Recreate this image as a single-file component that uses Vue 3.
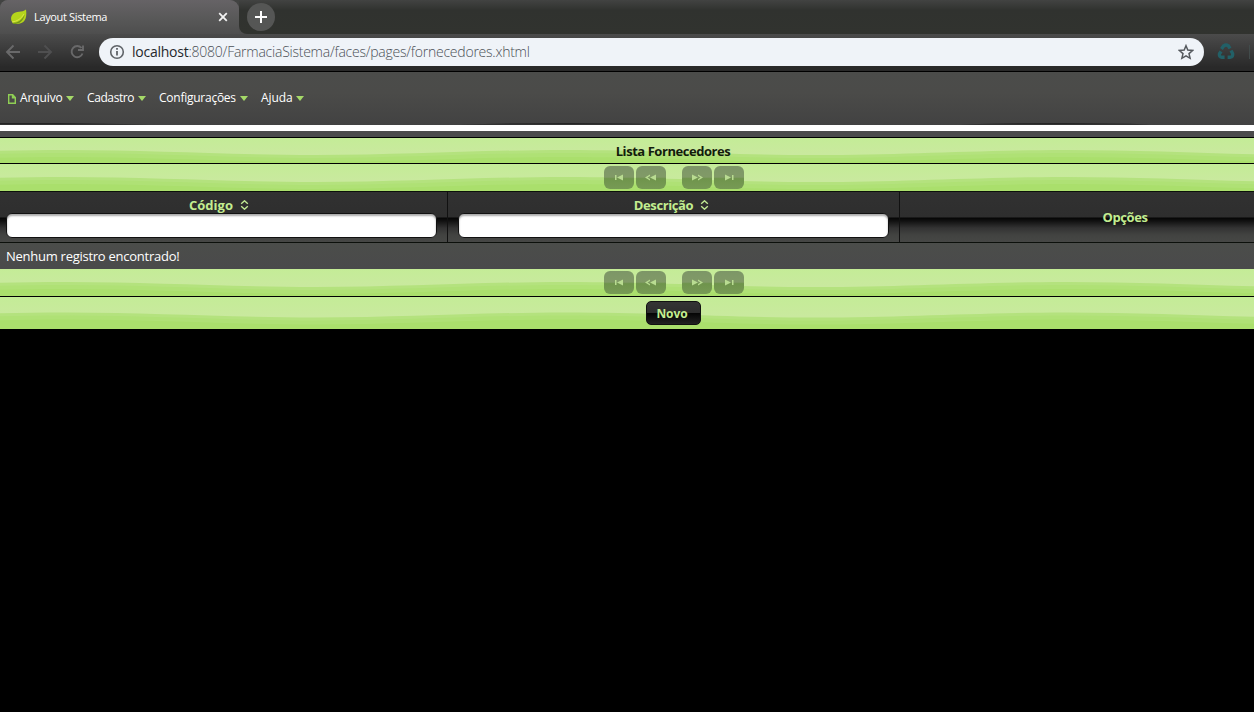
<script setup>
import { h } from 'vue'

const menu = ['Arquivo', 'Cadastro', 'Configurações', 'Ajuda']

// Repeating crest every 500px, first one near x = 66
const wave = (y) => {
  let d = `M-184 ${y + 5}`
  for (let x = -184; x < 1254; x += 250) {
    const up = ((x + 184) / 250) % 2 === 0
    const from = up ? y + 5 : y
    const to = up ? y : y + 5
    d += `C${x + 90} ${from} ${x + 160} ${to} ${x + 250} ${to}`
  }
  return d + 'V40H-184Z'
}

const Waves = (props) =>
  h('svg', { class: 'waves', width: 1254, height: 40, viewBox: '0 0 1254 40' }, [
    h('path', { d: wave(props.y), fill: '#b4e27e' }),
    h('path', { d: wave(props.y + 3), fill: '#afe175' }),
    h('path', { d: wave(props.y + 7), fill: '#aadf6c' }),
  ])
Waves.props = ['y']

const pagers = [
  'M11 9h1.500v5h-1.500zM19 8.500v6l-6-3z',
  'M14 8.500v1.500l-2.500 1.500 2.500 1.500v1.500l-5-3zM20 8.500v6l-6-3z',
  'M10 8.500v6l6-3zM16 8.500v1.500l2.500 1.500-2.500 1.500v1.500l5-3z',
  'M11 8.500v6l6-3zM18 9h1.500v5h-1.500z',
]
</script>

<template>
  <div class="screen">
    <header class="browser">
      <div class="tabs">
        <div class="tab">
          <svg class="leaf" width="18" height="18" viewBox="0 0 18 18">
            <path d="M16 1.500C12 5 6 2.500 2.500 6.500c-3 4-1 9 3 9.500 8 .5 12-4 10.500-14.500z" fill="#b5d51b" />
            <path d="M2 15c6 0 10-3 13-9-2 8-6 10-11 10z" fill="#74951c" />
            <path d="M2 14q8-1 12-8" fill="none" stroke="#dbe846" />
          </svg>
          <span class="tab-title">Layout Sistema</span>
          <svg class="close" width="10" height="10" viewBox="0 0 10 10"><path d="M1.200 1.200l7.600 7.600M8.800 1.200L1.200 8.800" stroke="#f3f3f3" stroke-width="1.800" /></svg>
        </div>
        <div class="tab-edge"><div class="plus"><svg width="12" height="12" viewBox="0 0 12 12"><path d="M6 0v12M0 6h12" stroke="#fff" stroke-width="2" /></svg></div></div>
      </div>
      <div class="toolbar">
        <svg class="nav" width="94" height="28" viewBox="0 0 94 28" fill="none" stroke-width="1.900">
          <path d="M20 14H7M13.500 7.500L7 14l6.500 6.500" stroke="#69696a" />
          <path d="M38 14h13M44.500 7.500L51 14l-6.500 6.500" stroke="#4f4f50" />
          <path d="M81.500 10A5.600 5.600 0 1 0 82.500 15.500M83 7.500v4.500h-5" stroke="#69696a" />
        </svg>
        <div class="address">
          <svg class="info" width="16" height="16" viewBox="0 0 16 16"><circle cx="8" cy="8" r="6.300" fill="none" stroke="#5f6368" stroke-width="1.600" /><path d="M8 7v4.500M8 4v1.700" stroke="#5f6368" stroke-width="1.800" /></svg>
          <span class="url"><b>localhost</b>:8080/FarmaciaSistema/faces/pages/fornecedores.xhtml</span>
          <svg class="star" width="16" height="16" viewBox="0 0 16 16"><path d="M8 1.700l1.800 4.400 4.800.4-3.600 3.100 1.100 4.700L8 11.800l-4.100 2.500L5 9.600 1.400 6.500l4.800-.4z" fill="none" stroke="#55595e" stroke-width="1.500" /></svg>
        </div>
        <svg class="recycle" width="18" height="18" viewBox="0 0 18 18" fill="none" stroke="#226067" stroke-width="3.400">
          <path d="M4.500 6L6.500 3q2.500-1.800 5 0l1.500 2.500" />
          <path d="M14 7.500l1.600 3q.6 3.200-2.200 3.700h-2.800" />
          <path d="M7.600 14.200H4.800q-3.100-.5-2.300-3.400L4 8.300" />
        </svg>
        <i class="split"></i>
      </div>
    </header>

    <nav class="menubar">
      <svg class="doc" width="8" height="10" viewBox="0 0 8 10"><path d="M.7.700h4l2.600 2.800v5.800H.7zM4.500.700v3h3" fill="none" stroke="#8fcf54" stroke-width="1.400" /></svg>
      <a v-for="(m, i) in menu" :key="m" :class="'m' + i"><span>{{ m }}</span><i class="caret"></i></a>
      <svg class="menu-shade" width="1254" height="3" viewBox="0 0 1254 3"><path d="M0 1H60L150 2.500H0zM460 2.500Q570-.5 680 2.500zM960 2.500Q1070-.5 1150 2.500z" fill="#242424" /></svg>
    </nav>
    <div class="white"></div>
    <div class="gap"></div>

    <div class="green title"><Waves :y="12" /><strong>Lista Fornecedores</strong></div>
    <div class="green pager top">
      <Waves :y="13" />
      <span v-for="(p, i) in pagers" :key="i" class="page-btn"><svg width="30" height="23" viewBox="0 0 30 23"><path :d="p" fill="#b9dc91" /></svg></span>
    </div>
    <div class="head">
      <div class="col c1"><div class="label">Código<svg width="9" height="10" viewBox="0 0 9 10"><path d="M1.200 3.800L4.500.8l3.300 3M1.200 6.200l3.300 3 3.300-3" fill="none" stroke="#c3ec94" stroke-width="1.400" /></svg></div><input type="text" /></div>
      <div class="col c2"><div class="label">Descrição<svg width="9" height="10" viewBox="0 0 9 10"><path d="M1.200 3.800L4.500.8l3.300 3M1.200 6.200l3.300 3 3.300-3" fill="none" stroke="#c3ec94" stroke-width="1.400" /></svg></div><input type="text" /></div>
      <div class="col c3"><span>Opções</span></div>
    </div>
    <div class="empty"><span>Nenhum registro encontrado!</span></div>
    <div class="green pager">
      <Waves :y="13" />
      <span v-for="(p, i) in pagers" :key="i" class="page-btn"><svg width="30" height="23" viewBox="0 0 30 23"><path :d="p" fill="#b9dc91" /></svg></span>
    </div>
    <div class="green foot"><Waves :y="15.500" /><button type="button">Novo</button></div>
  </div>
</template>

<style>
body { margin: 0; background: #000; overflow: hidden; }
</style>
<style scoped>
* { box-sizing: border-box; }
.screen { width: 1254px; height: 712px; overflow: hidden; background: #000; font-family: "Open Sans", "Noto Sans", sans-serif; font-size: 13px; }
svg { display: block; flex: none; }
.browser { height: 72px; border-bottom: 1px solid #000; background: #303030; }
.tabs { height: 34px; display: flex; background: linear-gradient(90deg, #4e4e4e 250px, transparent 250px), #4e4e4e; }
.tab { width: 239px; height: 34px; display: flex; align-items: center; padding-left: 10px; background: linear-gradient(#666366, #575757 60%, #4e4e4e); border-radius: 8px 9px 0 0; box-shadow: 0 -10px 0 #424342; }
.tab-title { margin-left: 6px; width: 184px; color: #fff; font-size: 11px; letter-spacing: -.35px; white-space: nowrap; position: relative; top: -1px; }
.tab-edge { flex: 1; height: 34px; background: linear-gradient(#424342, #30322f 30%, #31332f); border-bottom-left-radius: 8px; }
.plus { width: 28px; height: 28px; margin: 3px 0 0 8px; border-radius: 50%; background: #555655; display: flex; align-items: center; justify-content: center; }
.toolbar { height: 37px; padding-bottom: 2px; display: flex; align-items: center; background: linear-gradient(#4b4b4b, #292929 90%); }
.nav { margin-right: 5px; }
.address { width: 1105px; height: 28px; border-radius: 14px; background: #eff3f8; display: flex; align-items: center; padding: 0 10px; }
.url { margin-left: 7px; flex: 1; font-size: 14px; font-weight: 300; color: #4b5056; letter-spacing: -.24px; white-space: nowrap; }
.url b { color: #25282c; font-weight: 400; }
.recycle { margin-left: 13px; }
.split { width: 1px; height: 14px; margin-left: 14px; background: #414b4b; }
.menubar { position: relative; height: 53px; display: flex; align-items: center; padding-left: 8px; background: linear-gradient(#4b4c4a, #4b4b49 40%, #424242); color: #fff; font-size: 12px; }
.menubar a { height: 20px; display: flex; align-items: center; justify-content: space-between; }
.m0 { width: 54px; margin-left: 4px; letter-spacing: -.1px; }
.m1 { width: 59px; margin-left: 13px; letter-spacing: -.4px; }
.m2 { width: 89px; margin-left: 13px; letter-spacing: -.25px; }
.m3 { width: 43px; margin-left: 13px; letter-spacing: -.1px; }
.menubar a span { position: relative; top: -1px; }
.caret { border: 4px solid transparent; border-top: 5px solid #a5d968; border-bottom: 0; }
.menu-shade { position: absolute; left: 0; bottom: 0; }
.white { height: 6px; background: #fff; }
.gap { height: 6px; background: #4b4b4c; }
.green { position: relative; overflow: hidden; display: flex; align-items: center; padding-left: 92px; justify-content: center; background: linear-gradient(#c4ec97, #c9e99e 60%); border-top: 1px solid #000; }
.waves, .green :deep(.waves) { position: absolute; left: 0; top: 0; }
.title { height: 26px; color: #131c0b; }
.title strong { position: relative; font-size: 13px; letter-spacing: -.45px; }
.pager { height: 27px; border-top: 0; gap: 2px; padding-left: 94px; }
.pager.top { height: 28px; border-top: 1px solid #000; }
.page-btn { position: relative; width: 30px; height: 23px; border-radius: 6px; background: linear-gradient(#7d9667, #819a67 48%, #6f944c 55%, #779a55); }
.page-btn:nth-of-type(3) { margin-left: 14px; }
.head { height: 52px; display: flex; border: solid #0c100b; border-width: 1px 0; background: linear-gradient(#313131, #2e2e2e 25px, #050505 26px, #111 29px, #333 36px, #424341 43px, #464745); color: #c3ed90; font-weight: 700; overflow: hidden; }
.col { flex: none; border-right: 1px solid #111; letter-spacing: -.4px; }
.c1 { width: 448px; padding-left: 6px; }
.c2 { width: 452px; padding-left: 10px; }
.c3 { width: 450px; border: 0; display: flex; align-items: center; justify-content: center; }
.label { height: 21px; padding-top: 4px; display: flex; align-items: center; justify-content: center; gap: 7px; }
.c1 .label { width: 426px; letter-spacing: 0; }
.c2 .label { width: 427px; }
input { display: block; width: 431px; height: 25px; padding: 0 5px; border: 1px solid #111; border-radius: 6px; background: #fff; box-shadow: inset 0 2px 2px #aaa; outline: 0; }
.empty { height: 26px; display: flex; align-items: center; padding-left: 6px; background: linear-gradient(#4b4d4a, #4a4a4b); color: #fff; letter-spacing: -.26px; }
.foot { height: 33px; }
button { position: relative; width: 55px; height: 24px; padding: 0 2px 0 0; border: 1px solid #111; border-radius: 5px; background: linear-gradient(#343434, #2d2d2d 48%, #050505 52%, #222); color: #c3ed90; font: 700 12px "Open Sans", "Noto Sans", sans-serif; letter-spacing: -.1px; }
</style>
